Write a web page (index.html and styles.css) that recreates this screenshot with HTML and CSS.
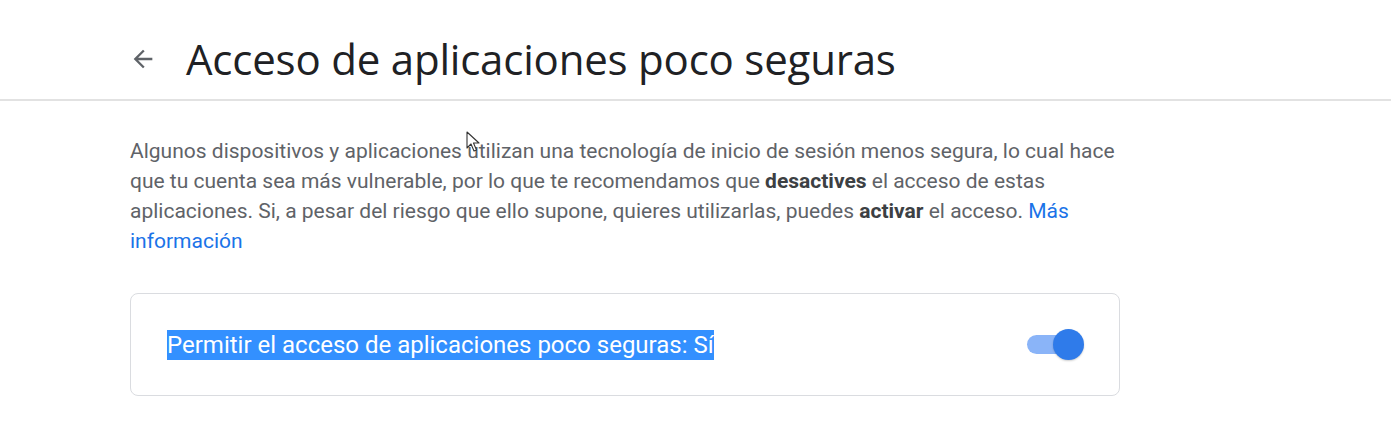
FILE: index.html
```html
<!DOCTYPE html>
<html lang="es">
<head>
<meta charset="utf-8">
<title>Acceso de aplicaciones poco seguras</title>
<link rel="stylesheet" href="styles.css">
</head>
<body>
<header class="topbar">
  <div class="topbar-inner">
    <span class="back" aria-label="Atrás">
      <svg width="28" height="28" viewBox="0 0 24 24"><path d="M20 11H7.83l5.59-5.59L12 4l-8 8 8 8 1.41-1.41L7.83 13H20v-2z" fill="#5f6368"/></svg>
    </span>
    <h1 class="title">Acceso de aplicaciones poco seguras</h1>
  </div>
</header>
<main class="content">
  <p class="desc">Algunos dispositivos y aplicaciones utilizan una tecnología de inicio de sesión menos segura, lo cual hace que tu cuenta sea más vulnerable, por lo que te recomendamos que <b>desactives</b> el acceso de estas aplicaciones. Si, a pesar del riesgo que ello supone, quieres utilizarlas, puedes <b>activar</b> el acceso. <a href="#" class="link">Más información</a></p>
  <section class="card">
    <span class="label"><span class="sel">Permitir el acceso de aplicaciones poco seguras: Sí</span></span>
    <span class="toggle"><span class="track"></span><span class="thumb"></span></span>
  </section>
</main>
<svg class="cursor" width="14" height="22" viewBox="0 0 14 22"><path d="M1 1 L1 17 L5 13 L8 20 L10.5 19 L7.5 12 L13 12 Z" fill="#fff" stroke="#333" stroke-width="1.1" stroke-linejoin="round"/></svg>
</body>
</html>
```
FILE: styles.css
```css
html, body { margin: 0; padding: 0; background: #fff; }
body { position: relative; font-family: Roboto, "Liberation Sans", sans-serif; }
.topbar { height: 99px; border-bottom: 2px solid #e2e2e2; display: flex; align-items: center; }
.topbar-inner { display: flex; align-items: center; padding-left: 129px; padding-top: 18px; }
.back { width: 28px; height: 28px; display: flex; }
.title { margin: 0 0 0 29px; font-family: "Open Sans", sans-serif; font-weight: 400; font-size: 42px; color: #202124; letter-spacing: -0.2px; }
.content { padding-left: 130px; width: 990px; }
.desc { margin: 35px 0 0; font-size: 21px; line-height: 30px; color: #5f6368; }
.desc b { color: #3c4043; font-weight: 700; }
.link { color: #1a73e8; text-decoration: none; }
.card { margin-top: 37px; height: 101px; border: 1px solid #dadce0; border-radius: 8px; display: flex; align-items: center; justify-content: space-between; padding: 0 36px; }
.label { font-size: 24px; }
.sel { background: #3390ff; color: #fff; padding: 1px 0; }
.toggle { position: relative; width: 58px; height: 31px; margin-right: -1px; }
.track { position: absolute; left: 1px; top: 6px; width: 44px; height: 19px; border-radius: 10px; background: #8ab4f8; }
.thumb { position: absolute; right: 0; top: 0; width: 31px; height: 31px; border-radius: 50%; background: #2f7bea; box-shadow: 0 1px 2px rgba(0,0,0,0.2); }
.cursor { position: absolute; left: 466px; top: 131px; }
```
